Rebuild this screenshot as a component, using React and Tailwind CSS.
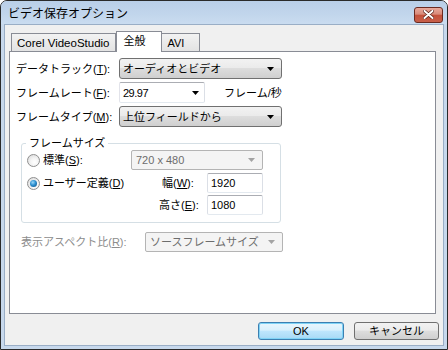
import React from "react";

const F = { fontFamily: '"Liberation Sans", "Noto Sans CJK JP", sans-serif' };

function Arrow({ color = "#000" }) {
  return (
    <svg width="7" height="4" viewBox="0 0 7 4" className="block">
      <polygon points="0,0 7,0 3.5,4" fill={color} />
    </svg>
  );
}

function DropButton({ text, w }) {
  return (
    <div
      className={`${w} h-[21px] flex items-center justify-between pl-[3px] pr-[7px] border border-[#707070] rounded-[3px] bg-[linear-gradient(to_bottom,#f2f2f2_0%,#ebebeb_45%,#dddddd_50%,#cfcfcf_100%)] text-black`}
    >
      <span className="leading-[14px]">{text}</span>
      <Arrow />
    </div>
  );
}

function DisabledCombo({ text, w }) {
  return (
    <div
      className={`${w} h-[20px] flex items-center justify-between pl-[4px] pr-[7px] border border-[#b4b4b4] rounded-[2px] bg-[#f4f4f4] text-[#6d6d6d]`}
    >
      <span className="leading-[14px]">{text}</span>
      <Arrow color="#a3a3a3" />
    </div>
  );
}

function TextBox({ text }) {
  return (
    <div className="w-[56px] h-[20px] flex items-center pl-[3px] border border-[#abadb3] border-l-[#dbdfe6] border-r-[#dbdfe6] border-b-[#e3e9ef] rounded-[2px] bg-white text-black">
      <span className="leading-[14px]">{text}</span>
    </div>
  );
}

function Radio({ checked }) {
  return (
    <div className="w-[13px] h-[13px] shrink-0 rounded-full border border-[#8f8f8f] bg-[radial-gradient(circle_at_60%_65%,#ffffff_0%,#f4f4f4_40%,#d5d5d5_100%)] flex items-center justify-center">
      {checked && (
        <div className="w-[7px] h-[7px] rounded-full bg-[radial-gradient(circle_at_40%_35%,#9ad6f8_0%,#2b8fd0_45%,#124b7c_100%)]" />
      )}
    </div>
  );
}

function U({ children }) {
  return <span className="underline underline-offset-[1px]">{children}</span>;
}

export default function App() {
  return (
    <div style={F} className="w-[448px] h-[350px] bg-white">
      <div className="w-[448px] h-[350px] flex flex-col border border-[#2a2a2a] rounded-t-[7px] bg-[#c7d8ec] text-[11px] text-black overflow-hidden">
        {/* Title bar */}
        <div className="h-[23px] shrink-0 flex items-center justify-between pl-[7px] pr-[4px] bg-[linear-gradient(to_bottom,#b9cfe8_0%,#c2d6ec_60%,#cadcf0_100%)]">
          <span className="text-[12px] leading-[16px] pt-[1px]" style={{ fontFamily: '"Noto Sans CJK JP", sans-serif' }}>
            ビデオ保存オプション
          </span>
          <div className="w-[29px] h-[16px] mt-[4px] rounded-[3px] border border-[#6b2a20] bg-[linear-gradient(to_bottom,#e9a99b_0%,#d88a7a_45%,#c4503a_50%,#c8604a_100%)] flex items-center justify-center">
            <svg width="11" height="9" viewBox="0 0 11 9">
              <path d="M1.5 1 L9.5 8 M9.5 1 L1.5 8" stroke="#5a2018" strokeWidth="3.4" strokeLinecap="round" />
              <path d="M1.5 1 L9.5 8 M9.5 1 L1.5 8" stroke="#ffffff" strokeWidth="2" strokeLinecap="round" />
            </svg>
          </div>
        </div>

        {/* Client area */}
        <div className="flex-1 mx-[3px] mb-[3px] border border-[#9aaec6] bg-[#f0f0f0] flex flex-col">
          {/* Tabs */}
          <div className="h-[20px] mt-[6px] ml-[6px] flex items-end">
            <div className="h-[18px] px-[5px] flex items-center border border-b-0 border-[#898c95] bg-[linear-gradient(to_bottom,#f2f2f2,#e3e3e3)] text-[11.5px]">
              <span className="leading-[14px]">Corel VideoStudio</span>
            </div>
            <div className="relative z-10 h-[21px] -mb-px w-[46px] flex items-start justify-center pt-[2px] border border-b-0 border-[#898c95] bg-white">
              <span className="leading-[14px] pr-[8px]">全般</span>
            </div>
            <div className="h-[18px] w-[38px] pl-[6px] flex items-center border border-b-0 border-l-0 border-[#898c95] bg-[linear-gradient(to_bottom,#f2f2f2,#e3e3e3)]">
              <span className="leading-[14px]">AVI</span>
            </div>
          </div>

          {/* Panel */}
          <div className="ml-[4px] w-[427px] h-[263px] border border-[#898c95] bg-white flex flex-col pt-[6px]">
            <div className="flex items-center h-[21px]">
              <span className="w-[109px] pl-[6px] leading-[14px]">
                データトラック(<U>T</U>):
              </span>
              <DropButton text="オーディオとビデオ" w="w-[163px]" />
            </div>
            <div className="flex items-center h-[21px] mt-[3px]">
              <span className="w-[109px] pl-[6px] leading-[14px]">
                フレームレート(<U>F</U>):
              </span>
              <div className="w-[86px] h-[21px] flex items-center justify-between pl-[3px] pr-[5px] border border-[#abadb3] border-l-[#e2e3ea] border-r-[#dbdfe6] border-b-[#e3e9ef] rounded-[2px] bg-white">
                <span className="leading-[14px] tracking-[-0.5px]">29.97</span>
                <Arrow />
              </div>
              <span className="ml-[19px] leading-[14px]">フレーム/秒</span>
            </div>
            <div className="flex items-center h-[21px] mt-[3px]">
              <span className="w-[109px] pl-[6px] leading-[14px]">
                フレームタイプ(<U>M</U>):
              </span>
              <DropButton text="上位フィールドから" w="w-[163px]" />
            </div>

            {/* Group box */}
            <div className="relative ml-[11px] mt-[16px] w-[260px] h-[80px] border border-[#d5dfe5] rounded-[3px] pt-[6px] pl-[5px]">
              <span className="absolute left-[4px] top-[-8px] px-[3px] bg-white leading-[14px]">フレームサイズ</span>
              <div className="flex items-center h-[20px]">
                <div className="w-[104px] flex items-center gap-[3px]">
                  <Radio />
                  <span className="leading-[14px]">
                    標準(<U>S</U>):
                  </span>
                </div>
                <DisabledCombo text="720 x 480" w="w-[132px]" />
              </div>
              <div className="flex items-center h-[20px] mt-[3px]">
                <div className="w-[135px] flex items-center gap-[3px]">
                  <Radio checked />
                  <span className="leading-[14px]">
                    ユーザー定義(<U>D</U>)
                  </span>
                </div>
                <span className="w-[45px] leading-[14px]">
                  幅(<U>W</U>):
                </span>
                <TextBox text="1920" />
              </div>
              <div className="flex items-center h-[20px] mt-[2px]">
                <div className="w-[132px]" />
                <span className="w-[48px] leading-[14px]">
                  高さ(<U>E</U>):
                </span>
                <TextBox text="1080" />
              </div>
            </div>

            <div className="flex items-center h-[20px] mt-[9px]">
              <span className="w-[135px] pl-[11px] leading-[14px] text-[#8d8d8d]">
                表示アスペクト比(<U>R</U>):
              </span>
              <DisabledCombo text="ソースフレームサイズ" w="w-[138px]" />
            </div>
          </div>

          {/* Buttons */}
          <div className="flex justify-end gap-[10px] mt-[8px] mr-[4px]">
            <div className="w-[86px] h-[18px] flex items-center justify-center rounded-[3px] border border-[#3c7fb1] bg-[linear-gradient(to_bottom,#eaf6fd_0%,#d9f0fc_45%,#bee6fd_50%,#a7d9f5_100%)] shadow-[inset_0_0_0_1px_#7fd3f6]">
              <span className="leading-[14px]">OK</span>
            </div>
            <div className="w-[85px] h-[18px] flex items-center justify-center rounded-[3px] border border-[#707070] bg-[linear-gradient(to_bottom,#f2f2f2_0%,#ebebeb_45%,#dddddd_50%,#cfcfcf_100%)]">
              <span className="leading-[14px]">キャンセル</span>
            </div>
          </div>
        </div>
      </div>
    </div>
  );
}
